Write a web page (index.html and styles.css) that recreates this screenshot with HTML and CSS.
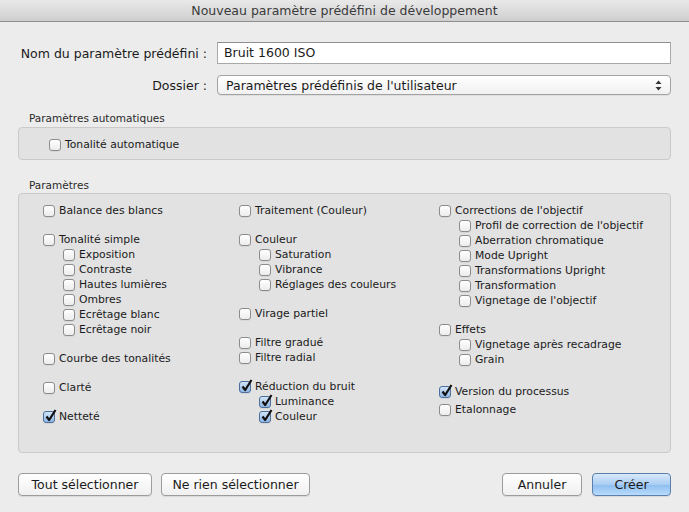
FILE: index.html
```html
<!DOCTYPE html>
<html lang="fr">
<head>
    <meta charset="UTF-8">
    <title>Nouveau paramètre prédéfini de développement</title>
    <link rel="stylesheet" href="styles.css">
</head>
<body>
    <div class="window">
        <div class="titlebar">Nouveau paramètre prédéfini de développement</div>

        <div class="content">
            <div class="form">
                <label class="form-label">Nom du paramètre prédéfini :</label>
                <div class="text-field">Bruit 1600 ISO</div>

                <label class="form-label">Dossier :</label>
                <div class="popup">
                    <span>Paramètres prédéfinis de l'utilisateur</span>
                    <svg class="popup-arrows" width="7" height="11" viewBox="0 0 7 11">
                        <path d="M3.5 0.5 L6.5 4 L0.5 4 Z" fill="#333"/>
                        <path d="M3.5 10.5 L6.5 7 L0.5 7 Z" fill="#333"/>
                    </svg>
                </div>
            </div>

            <!-- Paramètres automatiques -->
            <div class="group-title">Paramètres automatiques</div>
            <div class="group auto-group">
                <div class="check"><span class="cb"></span>Tonalité automatique</div>
            </div>

            <!-- Paramètres -->
            <div class="group-title">Paramètres</div>
            <div class="group params">
                <div class="col">
                    <div class="block">
                        <div class="check"><span class="cb"></span>Balance des blancs</div>
                    </div>
                    <div class="block">
                        <div class="check"><span class="cb"></span>Tonalité simple</div>
                        <div class="check sub"><span class="cb"></span>Exposition</div>
                        <div class="check sub"><span class="cb"></span>Contraste</div>
                        <div class="check sub"><span class="cb"></span>Hautes lumières</div>
                        <div class="check sub"><span class="cb"></span>Ombres</div>
                        <div class="check sub"><span class="cb"></span>Ecrêtage blanc</div>
                        <div class="check sub"><span class="cb"></span>Ecrêtage noir</div>
                    </div>
                    <div class="block">
                        <div class="check"><span class="cb"></span>Courbe des tonalités</div>
                    </div>
                    <div class="block">
                        <div class="check"><span class="cb"></span>Clarté</div>
                    </div>
                    <div class="block">
                        <div class="check"><span class="cb on"></span>Netteté</div>
                    </div>
                </div>

                <div class="col">
                    <div class="block">
                        <div class="check"><span class="cb"></span>Traitement (Couleur)</div>
                    </div>
                    <div class="block">
                        <div class="check"><span class="cb"></span>Couleur</div>
                        <div class="check sub"><span class="cb"></span>Saturation</div>
                        <div class="check sub"><span class="cb"></span>Vibrance</div>
                        <div class="check sub"><span class="cb"></span>Réglages des couleurs</div>
                    </div>
                    <div class="block">
                        <div class="check"><span class="cb"></span>Virage partiel</div>
                    </div>
                    <div class="block">
                        <div class="check"><span class="cb"></span>Filtre gradué</div>
                        <div class="check"><span class="cb"></span>Filtre radial</div>
                    </div>
                    <div class="block">
                        <div class="check"><span class="cb on"></span>Réduction du bruit</div>
                        <div class="check sub"><span class="cb on"></span>Luminance</div>
                        <div class="check sub"><span class="cb on"></span>Couleur</div>
                    </div>
                </div>

                <div class="col">
                    <div class="block">
                        <div class="check"><span class="cb"></span>Corrections de l'objectif</div>
                        <div class="check sub"><span class="cb"></span>Profil de correction de l'objectif</div>
                        <div class="check sub"><span class="cb"></span>Aberration chromatique</div>
                        <div class="check sub"><span class="cb"></span>Mode Upright</div>
                        <div class="check sub"><span class="cb"></span>Transformations Upright</div>
                        <div class="check sub"><span class="cb"></span>Transformation</div>
                        <div class="check sub"><span class="cb"></span>Vignetage de l'objectif</div>
                    </div>
                    <div class="block">
                        <div class="check"><span class="cb"></span>Effets</div>
                        <div class="check sub"><span class="cb"></span>Vignetage après recadrage</div>
                        <div class="check sub"><span class="cb"></span>Grain</div>
                    </div>
                    <div class="block process">
                        <div class="check"><span class="cb on"></span>Version du processus</div>
                        <div class="check etal"><span class="cb"></span>Etalonnage</div>
                    </div>
                </div>
            </div>

            <div class="buttons">
                <button class="btn select-all">Tout sélectionner</button>
                <button class="btn select-none">Ne rien sélectionner</button>
                <span class="spacer"></span>
                <button class="btn cancel">Annuler</button>
                <button class="btn default">Créer</button>
            </div>
        </div>
    </div>
</body>
</html>
```

FILE: styles.css
```css
body {
    margin: 0;
    background: #ececec;
    font-family: 'DejaVu Sans', 'Liberation Sans', sans-serif;
    color: #1a1a1a;
}

.window {
    width: 689px;
    height: 512px;
    background: #ececec;
    overflow: hidden;
}

.titlebar {
    height: 22px;
    line-height: 22px;
    text-align: center;
    font-size: 12.5px;
    color: #3a3a3a;
    background: linear-gradient(#e9e9e9, #cfcfcf);
    border-bottom: 1px solid #8e8e8e;
    box-sizing: border-box;
}

.content {
    padding: 0 18px;
}

/* Champs du haut */
.form {
    display: grid;
    grid-template-columns: 189px 1fr;
    column-gap: 10px;
    row-gap: 11px;
    align-items: center;
    padding-top: 20px;
    font-size: 12.5px;
}

.form-label {
    text-align: right;
}

.text-field {
    height: 22px;
    line-height: 20px;
    box-sizing: border-box;
    background: #fff;
    border: 1px solid #a9a9a9;
    border-top-color: #8f8f8f;
    padding: 0 6px;
}

.popup {
    height: 20px;
    box-sizing: border-box;
    display: flex;
    align-items: center;
    justify-content: space-between;
    padding: 0 8px 0 8px;
    background: linear-gradient(#ffffff, #f1f1f1);
    border: 1px solid #a2a2a2;
    border-radius: 4px;
    box-shadow: 0 1px 0 rgba(0, 0, 0, 0.06);
}

.popup-arrows {
    display: block;
}

/* Groupes */
.group-title {
    font-size: 10.5px;
    color: #2a2a2a;
    padding-left: 11px;
    height: 13px;
    line-height: 13px;
}

.form + .group-title {
    margin-top: 17px;
}

.group {
    background: #e2e2e2;
    border: 1px solid #cacaca;
    border-radius: 4px;
    box-sizing: border-box;
    margin-top: 2px;
}

.auto-group {
    height: 33px;
    padding: 9px 0 0 30px;
    margin-bottom: 19px;
}

.params {
    height: 260px;
    display: grid;
    grid-template-columns: 196px 200px 1fr;
    padding: 9px 0 0 24px;
    margin-top: 1px;
}

.col {
    display: flex;
    flex-direction: column;
    gap: 14px;
}

.check {
    display: flex;
    align-items: center;
    height: 15px;
    font-size: 10.8px;
    white-space: nowrap;
}

.check.sub {
    padding-left: 20px;
}

.process {
    margin-top: 3px;
}

.check.etal {
    margin-top: 3px;
}

/* Cases à cocher */
.cb {
    width: 12px;
    height: 12px;
    box-sizing: border-box;
    margin-right: 4px;
    flex: none;
    border: 1px solid #8c8c8c;
    border-radius: 3px;
    background: linear-gradient(#ffffff, #ececec);
    box-shadow: 0 1px 0 rgba(0, 0, 0, 0.05);
    position: relative;
}

.cb.on {
    border-color: #4a6f9d;
    background: linear-gradient(#d2e4f7, #8fb6e2);
}

.cb.on::after {
    content: '';
    position: absolute;
    left: 1px;
    top: -3px;
    width: 12px;
    height: 13px;
    background: url("data:image/svg+xml;utf8,<svg xmlns='http://www.w3.org/2000/svg' width='12' height='13' viewBox='0 0 12 13'><path d='M1.5 7.5 L4.2 11 L10.5 1' fill='none' stroke='%23111' stroke-width='2.2' stroke-linejoin='round'/></svg>") no-repeat;
}

/* Boutons */
.buttons {
    display: flex;
    align-items: center;
    margin-top: 20px;
    gap: 9px;
}

.spacer {
    flex: 1;
}

.btn {
    height: 23px;
    font-family: inherit;
    font-size: 12.5px;
    color: #1a1a1a;
    padding: 0;
    background: linear-gradient(#ffffff, #f0f0f0);
    border: 1px solid #9c9c9c;
    border-radius: 4px;
    box-shadow: 0 1px 0 rgba(0, 0, 0, 0.08);
}

.btn.select-all {
    width: 134px;
}

.btn.select-none {
    width: 149px;
}

.btn.cancel {
    width: 80px;
    margin-right: 1px;
}

.btn.default {
    width: 79px;
    border-color: #5a7fae;
    background: linear-gradient(#d9e9fa 0%, #a9cdf3 50%, #8ebdf0 51%, #b8dcfb 100%);
}
```
